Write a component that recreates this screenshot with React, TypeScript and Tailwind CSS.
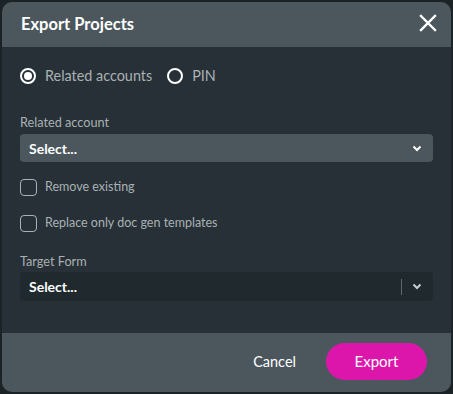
import React from "react";

export default function App() {
  return (
    <div className="w-[453px] h-[394px] bg-[#1c2327] p-[2px]" style={{ fontFamily: "Lato, 'Noto Sans', sans-serif" }}>
      <div className="w-[449px] h-[390px] rounded-[10px] overflow-hidden flex flex-col bg-[#263036]">
        <div className="h-[45px] bg-[#4b575d] flex items-center justify-between pl-[19px] pr-[14px] shrink-0">
          <span className="text-white font-bold text-[16.5px]">Export Projects</span>
          <svg width="18" height="18" viewBox="0 0 18 18" className="mb-[3px]">
            <path d="M2 2 L16 16 M16 2 L2 16" stroke="white" strokeWidth="2.4" strokeLinecap="square" />
          </svg>
        </div>
        <div className="flex-1 px-[18px] pt-[19px]">
          <div className="flex items-center h-[20px]">
            <span className="w-[16px] h-[16px] rounded-full border-2 border-white flex items-center justify-center">
              <span className="w-[8px] h-[8px] rounded-full bg-white" />
            </span>
            <span className="ml-[9px] text-[14.4px] text-[#aab1b4]">Related accounts</span>
            <span className="ml-[15px] w-[16px] h-[16px] rounded-full border-2 border-white" />
            <span className="ml-[9px] text-[14.4px] text-[#aab1b4]">PIN</span>
          </div>
          <div className="mt-[28px] text-[12.7px] text-[#aab1b4] leading-[16px]">Related account</div>
          <div className="mt-[4px] h-[28px] rounded-[4px] bg-[#4b575d] flex items-center justify-between pl-[9px] pr-[11px]">
            <span className="text-white font-bold text-[14px]">Select...</span>
            <svg width="10" height="7" viewBox="0 0 10 7"><path d="M1.5 1.5 L5 5 L8.5 1.5" stroke="white" strokeWidth="2" fill="none" /></svg>
          </div>
          <div className="mt-[16px] flex items-center h-[18px]">
            <span className="w-[17px] h-[17px] rounded-[4px] border border-[#aab1b4]" />
            <span className="ml-[8px] text-[12.5px] text-[#aab1b4]">Remove existing</span>
          </div>
          <div className="mt-[18px] flex items-center h-[18px]">
            <span className="w-[17px] h-[17px] rounded-[4px] border border-[#aab1b4]" />
            <span className="ml-[8px] text-[12.5px] text-[#aab1b4]">Replace only doc gen templates</span>
          </div>
          <div className="mt-[21px] text-[12.7px] text-[#aab1b4] leading-[16px]">Target Form</div>
          <div className="mt-[3px] h-[29px] rounded-[4px] bg-[#20292e] flex items-center pl-[9px] pr-[11px]">
            <span className="text-white font-bold text-[14px] flex-1">Select...</span>
            <span className="w-px h-[16px] bg-[#5c676c] mr-[10px]" />
            <svg width="10" height="7" viewBox="0 0 10 7"><path d="M1.5 1.5 L5 5 L8.5 1.5" stroke="#c8cdd0" strokeWidth="2" fill="none" /></svg>
          </div>
        </div>
        <div className="h-[59px] bg-[#4b575d] flex items-center justify-end pr-[24px] shrink-0 pb-[2px]">
          <span className="text-white text-[14.5px] mr-[30px]">Cancel</span>
          <button className="w-[101px] h-[37px] rounded-full bg-[#dd16ab] text-white text-[15px]">Export</button>
        </div>
      </div>
    </div>
  );
}
